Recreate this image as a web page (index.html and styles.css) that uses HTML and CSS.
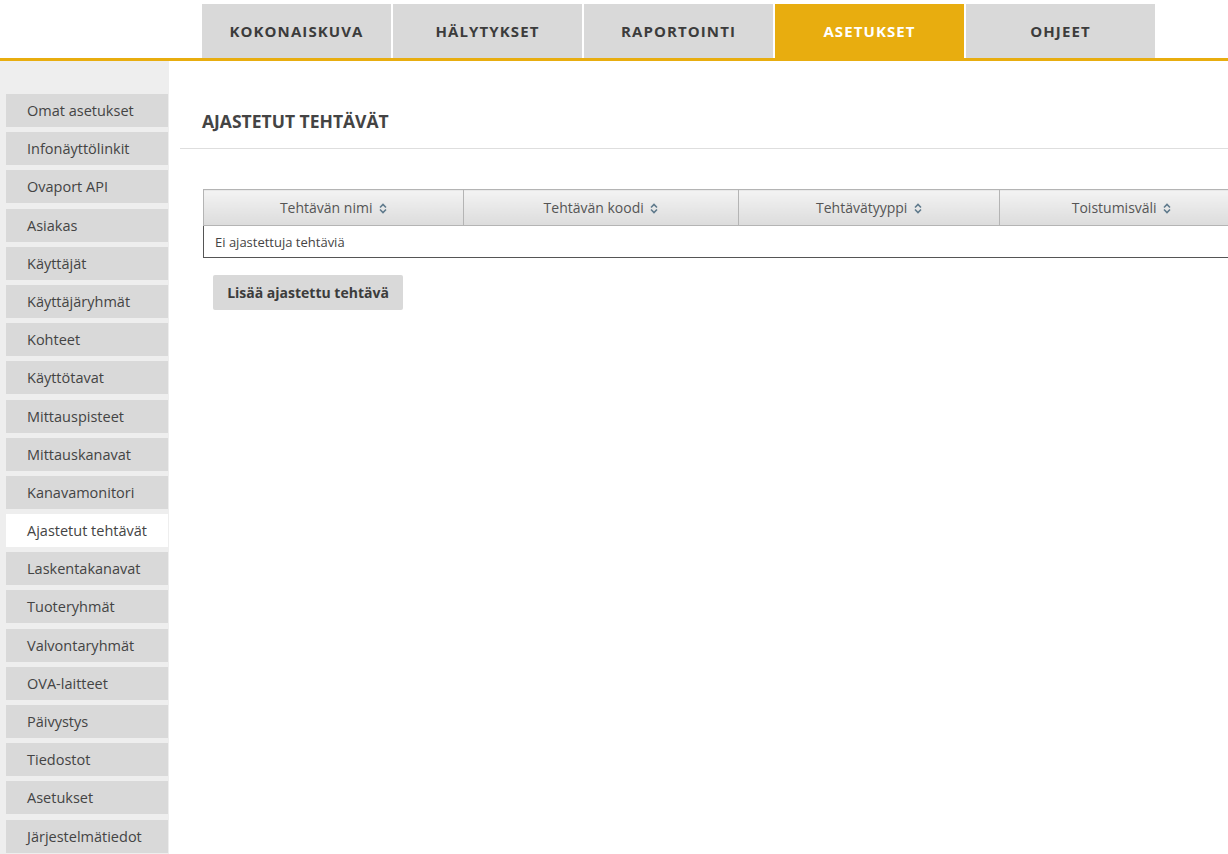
FILE: index.html
```html
<!DOCTYPE html>
<html lang="fi">
<head>
<meta charset="utf-8">
<title>Ajastetut tehtävät</title>
<link rel="stylesheet" href="styles.css">
</head>
<body>
<header class="topbar">
  <nav class="tabs">
    <a class="tab">KOKONAISKUVA</a>
    <a class="tab">HÄLYTYKSET</a>
    <a class="tab">RAPORTOINTI</a>
    <a class="tab tab-active">ASETUKSET</a>
    <a class="tab">OHJEET</a>
  </nav>
</header>
<div class="layout">
  <aside class="sidebar">
    <a class="side-item">Omat asetukset</a>
    <a class="side-item">Infonäyttölinkit</a>
    <a class="side-item">Ovaport API</a>
    <a class="side-item">Asiakas</a>
    <a class="side-item">Käyttäjät</a>
    <a class="side-item">Käyttäjäryhmät</a>
    <a class="side-item">Kohteet</a>
    <a class="side-item">Käyttötavat</a>
    <a class="side-item">Mittauspisteet</a>
    <a class="side-item">Mittauskanavat</a>
    <a class="side-item">Kanavamonitori</a>
    <a class="side-item side-active">Ajastetut tehtävät</a>
    <a class="side-item">Laskentakanavat</a>
    <a class="side-item">Tuoteryhmät</a>
    <a class="side-item">Valvontaryhmät</a>
    <a class="side-item">OVA-laitteet</a>
    <a class="side-item">Päivystys</a>
    <a class="side-item">Tiedostot</a>
    <a class="side-item">Asetukset</a>
    <a class="side-item">Järjestelmätiedot</a>
  </aside>
  <main class="content">
    <h1 class="page-title">AJASTETUT TEHTÄVÄT</h1>
    <div class="table-clip">
      <table class="grid">
        <colgroup>
          <col class="c1"><col class="c2"><col class="c3"><col class="c4">
        </colgroup>
        <thead>
          <tr>
            <th>Tehtävän nimi <svg class="sort" viewBox="0 0 8 11" width="8" height="11"><path d="M1 4.5 L4 1.5 L7 4.5 M1 6.5 L4 9.5 L7 6.5" fill="none" stroke="#5f7a8c" stroke-width="1.6"/></svg></th>
            <th>Tehtävän koodi <svg class="sort" viewBox="0 0 8 11" width="8" height="11"><path d="M1 4.5 L4 1.5 L7 4.5 M1 6.5 L4 9.5 L7 6.5" fill="none" stroke="#5f7a8c" stroke-width="1.6"/></svg></th>
            <th>Tehtävätyyppi <svg class="sort" viewBox="0 0 8 11" width="8" height="11"><path d="M1 4.5 L4 1.5 L7 4.5 M1 6.5 L4 9.5 L7 6.5" fill="none" stroke="#5f7a8c" stroke-width="1.6"/></svg></th>
            <th>Toistumisväli <svg class="sort" viewBox="0 0 8 11" width="8" height="11"><path d="M1 4.5 L4 1.5 L7 4.5 M1 6.5 L4 9.5 L7 6.5" fill="none" stroke="#5f7a8c" stroke-width="1.6"/></svg></th>
          </tr>
        </thead>
        <tbody>
          <tr><td colspan="4" class="empty">Ei ajastettuja tehtäviä</td></tr>
        </tbody>
      </table>
    </div>
    <button class="btn">Lisää ajastettu tehtävä</button>
  </main>
</div>
</body>
</html>
```
FILE: styles.css
```css
html, body {
  margin: 0;
  padding: 0;
  background: #fff;
  overflow: hidden;
  font-family: "Open Sans", "Noto Sans", sans-serif;
  color: #444;
}

.topbar {
  height: 58px;
  border-bottom: 3px solid #e8ad0f;
  box-sizing: content-box;
}

.tabs {
  display: flex;
  gap: 2px;
  padding: 4px 0 0 202px;
  height: 54px;
}

.tab {
  width: 189px;
  height: 54px;
  background: #d9d9d9;
  display: flex;
  align-items: center;
  justify-content: center;
  font-weight: 700;
  font-size: 15px;
  letter-spacing: 1.1px;
  color: #3c3c3c;
}

.tab-active {
  background: #e8ad0f;
  color: #fff;
}

.layout {
  display: flex;
  min-height: 793px;
}

.sidebar {
  width: 169px;
  flex: none;
  background: #eeeeee;
  box-sizing: border-box;
  padding: 33px 1px 0 6px;
  display: flex;
  flex-direction: column;
  gap: 5.2px;
}

.side-item {
  height: 33px;
  background: #d9d9d9;
  display: flex;
  align-items: center;
  padding-left: 21px;
  font-size: 14.5px;
  color: #444;
  white-space: nowrap;
}

.side-active {
  background: #fff;
}

.content {
  flex: 1;
  min-width: 0;
  padding-left: 11px;
  overflow: hidden;
}

.page-title {
  margin: 0;
  height: 88px;
  box-sizing: border-box;
  padding: 49px 0 0 22px;
  font-size: 17.5px;
  line-height: 22px;
  font-weight: 700;
  color: #444;
  border-bottom: 1px solid #dedede;
}

.table-clip {
  margin: 40px 0 0 23px;
  overflow: hidden;
}

.grid {
  border-collapse: collapse;
  table-layout: fixed;
  width: 1060px;
  border-bottom: 1px solid #555;
  border-left: 1px solid #555;
}

.c1 { width: 260px; }
.c2 { width: 275px; }
.c3 { width: 261px; }
.c4 { width: 264px; }

.grid th {
  height: 36px;
  box-sizing: border-box;
  background: linear-gradient(#f3f3f3, #dcdcdc);
  border: 1px solid #b4b4b4;
  font-weight: 400;
  font-size: 14px;
  color: #555;
  text-align: center;
  padding: 0;
}

.grid th:last-child { padding-right: 20px; }

.sort {
  vertical-align: -1px;
  margin-left: 3px;
}

.grid td.empty {
  height: 32px;
  box-sizing: border-box;
  padding: 0 0 0 11px;
  font-size: 13px;
  color: #444;
}

.btn {
  display: block;
  margin: 17px 0 0 33px;
  width: 190px;
  height: 35px;
  border: none;
  border-radius: 2px;
  background: #d9d9d9;
  font-family: inherit;
  font-weight: 700;
  font-size: 14px;
  color: #3c3c3c;
  padding: 0;
}
```
